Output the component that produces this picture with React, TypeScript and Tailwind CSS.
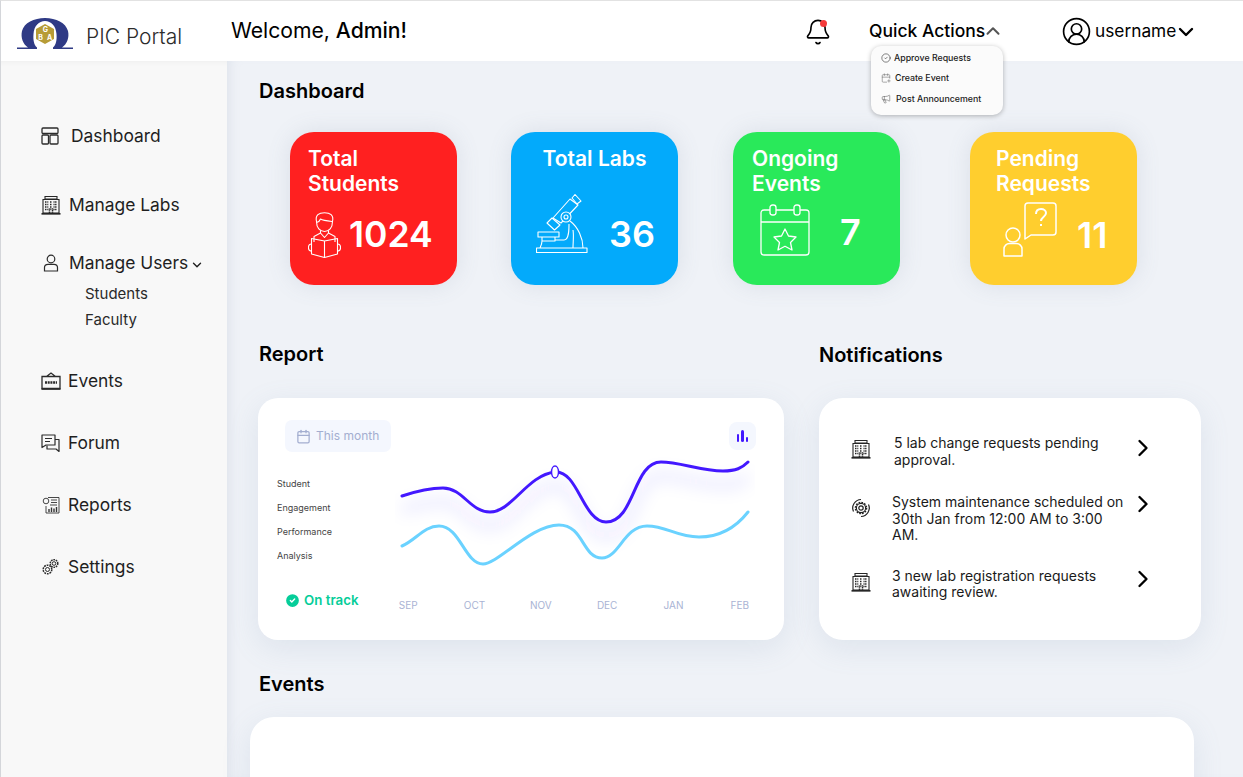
import React from 'react';
import { Bell, ChevronDown, ChevronUp, ChevronRight, CircleUserRound, CircleCheck, CalendarPlus, Megaphone, Calendar } from 'lucide-react';

const FONT = "font-['Inter','Liberation_Sans',sans-serif]";

// Omega mark with the gold cube
const Logo = () => (
  <svg width="56" height="31" viewBox="0 0 56 31">
    <path fill="#2f3a85" d="M0 31V29.500H11C6 26 3.500 20 5 13C7 5 17 0 28 0C39 0 49 5 51 13C52.500 20 50 26 45 29.500H56V31H36V29.500C39 27 40 22 39.500 16C39 8 34 3 28 3C22 3 17 8 16.500 16C16 22 17 27 20 29.500V31Z" />
    <path fill="#b79c36" d="M28 6L37 11V21L28 26L19 21V11Z" />
    <g fill="#fff" fontSize="7" fontWeight="700" textAnchor="middle">
      <text x="28.500" y="14">G</text>
      <text x="23.500" y="22">B</text>
      <text x="32.500" y="22">A</text>
    </g>
  </svg>
);

const BuildingIcon = ({ size = 20 }: { size?: number }) => (
  <svg width={size} height={size} viewBox="0 0 20 20" fill="none" stroke="#262626" strokeWidth="1.100">
    <path d="M4 1.500H16V4H4ZM2 4.500H18V18H2Z" />
    <path d="M0.500 18.800H19.500" strokeWidth="1.700" />
    <path d="M4 7H7.500M9 7H11M12.500 7H16M4 9.500H7.500M9 9.500H11M12.500 9.500H16M4 12H7.500M12.500 12H16M4 14.500H7.500M12.500 14.500H16M9 12H11M8.500 18V14H11.500V18" strokeWidth="1.500" strokeDasharray="1.100 0.500" />
  </svg>
);

const DashboardIcon = () => (
  <svg width="18" height="18" viewBox="0 0 18 18" fill="none" stroke="#2b2b2b" strokeWidth="1.300">
    <rect x="1" y="1" width="16" height="5.500" rx="1" />
    <rect x="1" y="8" width="6.500" height="9" rx="1" />
    <rect x="9" y="8" width="8" height="9" rx="1" />
  </svg>
);

const UserIcon = () => (
  <svg width="16" height="18" viewBox="0 0 16 18" fill="none" stroke="#2b2b2b" strokeWidth="1.200">
    <circle cx="8" cy="5" r="3.800" />
    <path d="M1.500 17V13.500C1.500 11.500 3 10.300 5 10.300H11C13 10.300 14.500 11.500 14.500 13.500V17Z" />
  </svg>
);

const BoardIcon = () => (
  <svg width="20" height="18" viewBox="0 0 20 18" fill="none" stroke="#2b2b2b" strokeWidth="1.300">
    <path d="M1 4.500H19V16.500H1ZM5.500 4.500L10 1L14.500 4.500" />
    <path d="M0.500 17H19.500" strokeWidth="1.700" />
    <path d="M4 10.500H16" strokeWidth="2.400" strokeDasharray="2 0.700" />
  </svg>
);

const ForumIcon = () => (
  <svg width="19" height="18" viewBox="0 0 19 18" fill="none" stroke="#2b2b2b" strokeWidth="1.200" strokeLinejoin="round">
    <path d="M1 1H14V11H5L1 13.500Z" />
    <path d="M4 4.500H11M4 7.500H9" />
    <path d="M14 5.500H18V17.500L15 15H6V11.500" />
  </svg>
);

const ReportIcon = () => (
  <svg width="18" height="18" viewBox="0 0 18 18" fill="none" stroke="#333" strokeWidth="0.900">
    <path d="M6 1.500H17V17H4V10" />
    <circle cx="4" cy="5" r="2.800" />
    <path d="M9 4H15M9 6.500H15M8 9H15" />
    <path d="M7 16V13M9.500 16V11.500M12 16V12.500M14.500 16V11" strokeWidth="1.400" />
  </svg>
);

const GearsIcon = () => (
  <svg width="18" height="18" viewBox="0 0 18 18" fill="none" stroke="#2b2b2b" strokeWidth="1">
    <circle cx="12" cy="5.500" r="1.800" />
    <circle cx="12" cy="5.500" r="3.800" strokeDasharray="1.600 0.800" strokeWidth="1.500" />
    <circle cx="5.500" cy="11.500" r="2" />
    <circle cx="5.500" cy="11.500" r="4.300" strokeDasharray="1.800 0.900" strokeWidth="1.500" />
  </svg>
);

const MaintenanceIcon = () => (
  <svg width="20" height="20" viewBox="0 0 20 20" fill="none" stroke="#222" strokeWidth="1.200">
    <circle cx="10" cy="10" r="2.200" />
    <circle cx="10" cy="10" r="4.600" strokeWidth="1.100" />
    <circle cx="10" cy="10" r="5.600" strokeDasharray="1.700 1.200" strokeWidth="1.400" />
    <path d="M2.500 13.500A8.500 8.500 0 0 1 10 1.500M17.500 6.500A8.500 8.500 0 0 1 10 18.500" />
  </svg>
);

const StudentIcon = () => (
  <svg width="33" height="46" viewBox="0 0 33 46" fill="none" stroke="#fff" strokeWidth="1.100" strokeLinejoin="round">
    <path d="M8.500 9.500C7 3 11 0.700 16.500 0.700C22 0.700 26 3 24.500 9.500C24.500 16 21 19.500 16.500 19.500C12 19.500 8.500 16 8.500 9.500Z" />
    <path d="M8.500 10.500C11 10 12 8.500 12.500 7C15 8.500 20 9 24.500 9.500" />
    <path d="M12.500 18.500V21L6 24.500V30M20.500 18.500V21L27 24.500V30M12.500 21L16.500 25.500L20.500 21" />
    <path d="M16.500 29V45.500L3.500 42V26.500ZM16.500 29L29.500 26.500V42L16.500 45.500" />
    <path d="M3.500 32C1 32 0.500 34 0.500 35.500C0.500 37.500 1.500 39 3.500 39M29.500 32C32 32 32.500 34 32.500 35.500C32.500 37.500 31.500 39 29.500 39" />
  </svg>
);

const MicroscopeIcon = () => (
  <svg width="52" height="59" viewBox="0 0 52 59" fill="none" stroke="#fff" strokeWidth="1.100" strokeLinejoin="round">
    <path d="M17 24L34 5L42 11L25 29Z" />
    <path d="M11 29L16 24L24 31L18.500 36Z" />
    <path d="M36 4L39 0.500L45 7L41 10Z" />
    <circle cx="30" cy="23" r="5" fill="#03aafb" />
    <circle cx="30" cy="23" r="2" />
    <path d="M34 27C42 33 47 44 47 54M37 36C38 42 37 48 37 54M19 46H28C33 46 33 36 33 30" />
    <path d="M2 38H23V43H2ZM6 43V47H19V43M6 47C6 50 5 52 4 54M0.500 54H51V58.500H0.500Z" />
  </svg>
);

const CalendarStarIcon = () => (
  <svg width="50" height="52" viewBox="0 0 50 52" fill="none" stroke="#fff" strokeWidth="1.300" strokeLinejoin="round">
    <path d="M10 6H4C2 6 1 7.500 1 9V48C1 50 2.500 51 4 51H46C48 51 49 50 49 48V9C49 7.500 48 6 46 6H40M16 6H34" />
    <rect x="10" y="1" width="6" height="10" rx="2.500" />
    <rect x="34" y="1" width="6" height="10" rx="2.500" />
    <path d="M1 18H49" />
    <path d="M25 25L28.500 32L36 33L30.500 38.500L32 46L25 42.300L18 46L19.500 38.500L14 33L21.500 32Z" />
  </svg>
);

const AskIcon = () => (
  <svg width="54" height="55" viewBox="0 0 54 55" fill="none" stroke="#fff" strokeWidth="1.500" strokeLinejoin="round">
    <path d="M22 37V4C22 2 23.500 1 25 1H50C52 1 53 2.500 53 4V30C53 31.500 52 33 50 33H28Z" />
    <path d="M33 12C33 9 35 7 38 7C41 7 43 9 43 11C43 15 38 15 38 19M38 22V24" strokeWidth="2" />
    <circle cx="10" cy="33" r="7" />
    <path d="M1 54V47C1 44 3.500 41.500 6.500 41.500H13.500C16.500 41.500 19 44 19 47V54Z" />
  </svg>
);

const navClass = "flex items-center h-[24px] text-[17.400px] text-[#1f1f1f]";

const Sidebar = () => (
  <aside className="w-[227px] shrink-0 bg-[#f8f8f8] border-l border-[#d4d6da] pl-[40px] pt-[63px] shadow-[inset_0_6px_6px_-6px_rgba(0,0,0,0.06)]">
    <div className={navClass}><DashboardIcon /><span className="ml-[12px]">Dashboard</span></div>
    <div className={`${navClass} mt-[45px]`}><BuildingIcon /><span className="ml-[8px]">Manage Labs</span></div>
    <div className={`${navClass} mt-[34px]`}>
      <span className="w-[20px] flex justify-center"><UserIcon /></span>
      <span className="ml-[8px]">Manage Users</span>
      <ChevronDown className="w-[14px] h-[14px] ml-[2px] mt-[3px]" strokeWidth={2.400} />
    </div>
    <div className="ml-[44px] mt-[6px] text-[15px] leading-[26px] text-[#2a2a2a]">
      <div className="h-[26px]">Students</div>
      <div className="h-[26px]">Faculty</div>
    </div>
    <div className={`${navClass} mt-[36px]`}><BoardIcon /><span className="ml-[7px]">Events</span></div>
    <div className={`${navClass} mt-[38px]`}><ForumIcon /><span className="ml-[8px]">Forum</span></div>
    <div className={`${navClass} mt-[38px]`}><span className="w-[19px] flex justify-center"><ReportIcon /></span><span className="ml-[8px]">Reports</span></div>
    <div className={`${navClass} mt-[38px]`}><span className="w-[19px] flex justify-center"><GearsIcon /></span><span className="ml-[8px]">Settings</span></div>
  </aside>
);

const Header = () => (
  <header className="h-[61px] shrink-0 bg-white border-t border-[#e2e2e2] border-l-[#d4d6da] border-l flex items-center">
    <div className="w-[230px] flex items-center pl-[16px] shrink-0">
      <span className="mt-[4px]"><Logo /></span>
      <span className="ml-[13px] mt-[11px] text-[21px] font-light text-[#2c2c2c]">PIC Portal</span>
    </div>
    <div className="w-[576px] shrink-0 text-[21.150px] text-black">Welcome, <span className="font-medium">Admin!</span></div>
    <div className="relative w-[23px] h-[26px] mt-[2px] shrink-0">
      <Bell className="w-[28px] h-[28px] -ml-[3px] -mt-[1px] text-black" strokeWidth={1.400} />
      <span className="absolute right-[3px] top-[1px] w-[7px] h-[7px] rounded-full bg-[#f43b3b]" />
    </div>
    <div className="relative ml-[39px] w-[194px] flex items-center shrink-0">
      <span className="text-[17.500px] font-medium text-black">Quick Actions</span>
      <ChevronUp className="w-[22px] h-[22px] -ml-[3px] text-[#555]" strokeWidth={2.200} />
      <div className="absolute left-[2px] top-[28px] w-[132px] h-[69px] rounded-[10px] bg-[#fbfbfb] shadow-[0_1px_5px_rgba(0,0,0,0.28)] px-[10px] pt-[5px] text-[8.800px] font-medium text-[#1c1c1c] z-10">
        <div className="flex items-center h-[14px]"><CircleCheck className="w-[10px] h-[10px]" strokeWidth={1.300} /><span className="ml-[3px]">Approve Requests</span></div>
        <div className="flex items-center h-[14px] mt-[6px]"><CalendarPlus className="w-[10px] h-[10px] text-[#666]" strokeWidth={1.300} /><span className="ml-[4px]">Create Event</span></div>
        <div className="flex items-center h-[14px] mt-[7px]"><Megaphone className="w-[10px] h-[10px] text-[#555]" strokeWidth={1.300} /><span className="ml-[5px]">Post Announcement</span></div>
      </div>
    </div>
    <CircleUserRound className="w-[31px] h-[31px] -mx-[2px] shrink-0 text-black" strokeWidth={1.300} />
    <span className="ml-[5px] text-[17.300px] text-black">username</span>
    <ChevronDown className="w-[24px] h-[24px] -ml-[2px] mt-[1px] text-black shrink-0" strokeWidth={2.400} />
  </header>
);

const StatCard = ({ title, value, color, className, icon, rowClass, numClass }: {
  title: React.ReactNode; value: string; color: string; className: string; icon: React.ReactNode; rowClass: string; numClass: string;
}) => (
  <div className={`w-[167px] h-[153px] rounded-[24px] pt-[14px] text-white shadow-[0_0_24px_rgba(100,115,140,0.14)] ${color} ${className}`}>
    <div className="text-[21px] leading-[25px] font-semibold">{title}</div>
    <div className={`flex items-start ${rowClass}`}>
      {icon}
      <span className={numClass}>{value}</span>
    </div>
  </div>
);

const Chart = () => {
  const purple = "M7 46C22 41 33 38 48 38C68 38 75 62 95 62C117 62 132 25 160 22C183 20 188 72 211 72C240 72 238 12 266 12C285 12 306 21 328 21C341 21 347 18 353 12";
  const cyan = "M7 96C21 90 29 76 44 76C65 76 70 114 88 114C103 114 136 75 164 75C189 75 187 108 207 108C224 108 229 76 252 76C272 76 281 87 304 87C327 87 342 76 353 62";
  return (
    <svg width="360" height="125" viewBox="0 2 360 125" className="shrink-0">
      <defs>
        <filter id="glow" x="-10%" y="-50%" width="120%" height="200%">
          <feGaussianBlur stdDeviation="8" />
        </filter>
      </defs>
      <path d={purple} transform="translate(0 14)" fill="none" stroke="#4318ff" strokeOpacity="0.08" strokeWidth="10" filter="url(#glow)" />
      <path d={cyan} fill="none" stroke="#6ad2ff" strokeWidth="3" strokeLinecap="round" />
      <path d={purple} fill="none" stroke="#4318ff" strokeWidth="3" strokeLinecap="round" />
      <ellipse cx="160" cy="22" rx="3.500" ry="6" fill="#fff" stroke="#4318ff" strokeWidth="1.500" />
    </svg>
  );
};

const ReportCard = () => (
  <div className="w-[526px] h-[242px] rounded-[20px] bg-white shadow-[0_8px_30px_rgba(112,144,176,0.14)] shrink-0">
    <div className="flex justify-between items-start pt-[22px] pl-[27px] pr-[28px] h-[54px]">
      <div className="w-[106px] h-[32px] rounded-[7px] bg-[#f4f7fe] flex items-center pl-[11px] text-[12px] text-[#a3aed0]">
        <Calendar className="w-[15px] h-[15px]" strokeWidth={2} />
        <span className="ml-[5px]">This month</span>
      </div>
      <div className="w-[27px] h-[28px] mt-[2px] rounded-[8px] bg-[#f4f7fe] flex items-end justify-center gap-[2px] pb-[8px]">
        <span className="w-[2.500px] h-[8px] rounded-full bg-[#4318ff]" />
        <span className="w-[2.500px] h-[12px] rounded-full bg-[#4318ff]" />
        <span className="w-[2.500px] h-[5px] rounded-full bg-[#4318ff]" />
      </div>
    </div>
    <div className="flex">
      <div className="w-[137px] pl-[19px] pt-[20px] text-[9px] leading-[24px] text-[#444]">
        <div>Student</div>
        <div>Engagement</div>
        <div>Performance</div>
        <div>Analysis</div>
      </div>
      <Chart />
    </div>
    <div className="flex h-[63px]">
      <div className="w-[117px] pl-[26px] pt-[14px] flex items-start shrink-0">
        <CircleCheck className="w-[17px] h-[17px] mt-[1px] text-white fill-[#05cd99]" strokeWidth={2} />
        <span className="ml-[3px] text-[13.300px] leading-[18px] font-semibold text-[#05cd99] whitespace-nowrap">On track</span>
      </div>
      <div className="grid grid-cols-6 w-[398px] pt-[20px] text-[10px] leading-[16px] text-center text-[#a9b3d4]">
        <span>SEP</span><span>OCT</span><span>NOV</span><span>DEC</span><span>JAN</span><span>FEB</span>
      </div>
    </div>
  </div>
);

const notifications = [
  { key: "a", lines: <>5 lab change requests pending<br />approval.</>, icon: <BuildingIcon />, textClass: "ml-[23px] w-[235px]", rowClass: "", chevClass: "-mt-[1px]" },
  { key: "b", lines: <>System maintenance scheduled on<br />30th Jan from 12:00 AM to 3:00<br />AM.</>, icon: <MaintenanceIcon />, textClass: "ml-[21px] w-[237px]", rowClass: "mt-[26px]", chevClass: "-mt-[4px]" },
  { key: "c", lines: <>3 new lab registration requests<br />awaiting review.</>, icon: <BuildingIcon />, textClass: "ml-[21px] w-[237px]", rowClass: "mt-[24px]", chevClass: "-mt-[3px]" },
];

const NotificationCard = () => (
  <div className="w-[382px] h-[242px] rounded-[24px] bg-white shadow-[0_8px_30px_rgba(112,144,176,0.14)] pt-[37px] pl-[32px]">
    {notifications.map((n) => (
      <div key={n.key} className={`flex items-start ${n.rowClass}`}>
        <span className="w-[20px] mt-[4px] shrink-0">{n.icon}</span>
        <p className={`${n.textClass} text-[14px] leading-[16.500px] text-[#1a1a1a] whitespace-nowrap shrink-0`}>{n.lines}</p>
        <ChevronRight className={`w-[28px] h-[28px] shrink-0 text-black ${n.chevClass}`} strokeWidth={2} />
      </div>
    ))}
  </div>
);

export default function App() {
  return (
    <div className={`w-[1243px] h-[777px] overflow-hidden flex flex-col ${FONT}`}>
      <Header />
      <div className="flex flex-1 min-h-0">
        <Sidebar />
        <main className="flex-1 bg-[#eff2f7] pl-[31px] pt-[18px] shadow-[inset_10px_0_14px_-10px_rgba(112,130,160,0.18)]">
          <h1 className="ml-px text-[20px] leading-[24px] font-semibold text-black">Dashboard</h1>
          <div className="flex mt-[29px] ml-[32px]">
            <StatCard
              title={<>Total<br />Students</>} value="1024" color="bg-[#ff2020]" className="pl-[18px]"
              rowClass="mt-[16px]" numClass="ml-[8px] text-[35.500px] leading-[46px] font-semibold"
              icon={<StudentIcon />}
            />
            <StatCard
              title={<span className="block text-center">Total Labs</span>} value="36" color="bg-[#03aafb]" className="ml-[54px]"
              rowClass="ml-[25px] mt-[23px]" numClass="ml-[21px] mt-[17px] text-[36px] leading-[46px] font-semibold"
              icon={<MicroscopeIcon />}
            />
            <StatCard
              title={<>Ongoing<br />Events</>} value="7" color="bg-[#29e95a]" className="ml-[55px] pl-[19px]"
              rowClass="ml-[8px] mt-[8px]" numClass="ml-[30px] mt-[5px] text-[36px] leading-[46px] font-semibold"
              icon={<CalendarStarIcon />}
            />
            <StatCard
              title={<>Pending<br />Requests</>} value="11" color="bg-[#ffce2e]" className="ml-[70px] pl-[26px]"
              rowClass="ml-[7px] mt-[6px]" numClass="ml-[20px] mt-[10px] text-[36px] leading-[46px] font-semibold"
              icon={<AskIcon />}
            />
          </div>
          <div className="flex mt-[57px] text-[20px] leading-[24px] font-semibold text-black">
            <h2 className="w-[561px] pl-px">Report</h2>
            <h2 className="mt-[1px]">Notifications</h2>
          </div>
          <div className="flex gap-[35px] mt-[31px]">
            <ReportCard />
            <NotificationCard />
          </div>
          <h2 className="ml-px mt-[32px] text-[20px] leading-[24px] font-semibold text-black">Events</h2>
          <div className="mt-[21px] -ml-[8px] w-[944px] h-[100px] rounded-[24px] bg-white shadow-[0_8px_30px_rgba(112,144,176,0.14)]" />
        </main>
      </div>
    </div>
  );
}
